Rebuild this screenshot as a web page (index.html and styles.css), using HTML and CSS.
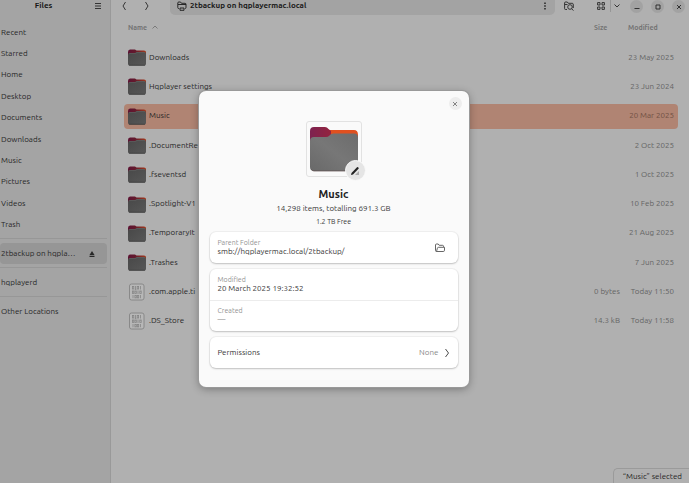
FILE: index.html
```html
<!DOCTYPE html>
<html lang="en">
<head>
<meta charset="utf-8">
<title>Files</title>
<link rel="stylesheet" href="styles.css">
</head>
<body>
<svg class="defs" aria-hidden="true">
  <defs>
    <linearGradient id="tab" x1="0" y1="0" x2="1" y2="0"><stop offset="0" stop-color="#5c1233"/><stop offset=".4" stop-color="#641a2c"/><stop offset="1" stop-color="#a33a1c"/></linearGradient>
    <linearGradient id="front" x1="0" y1="0" x2="1" y2="1"><stop offset="0" stop-color="#484848"/><stop offset="1" stop-color="#575757"/></linearGradient>
    <linearGradient id="purple" x1="0" y1="0" x2="1" y2="0"><stop offset="0" stop-color="#7d2350"/><stop offset="1" stop-color="#94233f"/></linearGradient>
    <linearGradient id="grey" x1="0" y1="1" x2="1" y2="0"><stop offset="0" stop-color="#696969"/><stop offset=".5" stop-color="#777"/><stop offset="1" stop-color="#6c6c6c"/></linearGradient>
    <symbol id="folder" viewBox="0 0 18 17">
      <path d="M0 3Q0 .5 2 .5H7L8.500 1.500H16Q18 1.500 18 3V8H0Z" fill="url(#tab)"/>
      <path d="M0 6Q0 4 2 4H7L8.500 3H16Q18 3 18 5V15Q18 16.500 16 16.500H2Q0 16.500 0 15Z" fill="url(#front)"/>
      <path d="M1 5Q1 4.500 2 4.500H7.500L9 3.500H17" fill="none" stroke="#676767" stroke-width=".5"/>
      <path d="M1 16.300H17" stroke="#333" stroke-width=".7"/>
    </symbol>
    <symbol id="binary" viewBox="0 0 18 18">
      <rect x="1.500" y="1" width="14.500" height="16" rx="2" fill="#b7b7b7" stroke="#858585"/>
      <g fill="none" stroke="#858585" stroke-width=".8">
        <rect x="4.400" y="3.500" width="1.400" height="2.500"/><path d="M7.500 3V6.500M12.500 3V6.500M6.900 6.400h1.400"/><rect x="9.200" y="3.500" width="1.400" height="2.500"/>
        <rect x="4.400" y="8" width="1.400" height="2.500"/><rect x="6.900" y="8" width="1.400" height="2.500"/><path d="M10 7.500V11"/><rect x="11.800" y="8" width="1.400" height="2.500"/>
        <path d="M5 12V15.200M12.500 12V15.200"/><rect x="6.900" y="12.400" width="1.400" height="2.500"/><rect x="9.300" y="12.400" width="1.400" height="2.500"/>
      </g>
    </symbol>
  </defs>
</svg>
<div class="window">
  <aside class="sidebar">
    <header class="side-head">
      <h1>Files</h1>
      <button class="icon-btn" aria-label="Main menu"><svg width="8" height="8" viewBox="0 0 8 8"><path d="M1 1.500H7M1 4H7M1 6.500H7"/></svg></button>
    </header>
    <nav>
      <ul class="places">
        <li><a href="#">Recent</a></li>
        <li><a href="#">Starred</a></li>
        <li><a href="#">Home</a></li>
        <li><a href="#">Desktop</a></li>
        <li><a href="#">Documents</a></li>
        <li><a href="#">Downloads</a></li>
        <li><a href="#">Music</a></li>
        <li><a href="#">Pictures</a></li>
        <li><a href="#">Videos</a></li>
        <li><a href="#">Trash</a></li>
      </ul>
      <div class="group current"><a href="#">2tbackup on hqpla…</a><button class="icon-btn" aria-label="Eject"><svg width="6" height="6" viewBox="0 0 6 6"><path class="solid" d="M3 0L5.500 4H.5ZM.5 4.800H5.500V6H.5Z"/></svg></button></div>
      <div class="group"><a href="#">hqplayerd</a></div>
      <div class="group"><a href="#">Other Locations</a></div>
    </nav>
  </aside>
  <main class="content">
    <header class="toolbar">
      <button class="icon-btn" aria-label="Back"><svg width="6" height="10" viewBox="0 0 6 10"><path d="M4.500 1L2 5L4.500 9"/></svg></button>
      <button class="icon-btn" aria-label="Forward"><svg width="6" height="10" viewBox="0 0 6 10"><path d="M1.500 1L4 5L1.500 9"/></svg></button>
      <div class="path">
        <svg width="10" height="10" viewBox="0 0 10 10"><path d="M2 7.500H1.500Q.8 7.500 .8 6.500V2Q.8 1 1.800 1H3.500L4.500 2.300H8Q9 2.300 9 3.300V6.500Q9 7.500 8 7.500M1 3.500H9M3 7H7V9.300H3Z"/></svg>
        <span>2tbackup on hqplayermac.local</span>
        <button class="icon-btn" aria-label="Folder menu"><svg width="8" height="8" viewBox="0 0 8 8"><path class="solid" d="M3.300 .5h1.400v1.400H3.300ZM3.300 3.300h1.400v1.400H3.300ZM3.300 6.100h1.400v1.400H3.300Z"/></svg></button>
      </div>
      <button class="icon-btn search" aria-label="Search"><svg width="10" height="10" viewBox="0 0 10 10"><path d="M3 8.500H1.500Q.6 8.500 .6 7.500V2Q.6 1 1.600 1H3.300L4.300 2.300H8.300Q9.300 2.300 9.300 4V7M.8 3.500H3.500M7.600 7.800L9.500 9.500"/><circle cx="6" cy="6" r="2.300"/></svg></button>
      <button class="icon-btn grid-view" aria-label="Grid view"><svg width="8" height="8" viewBox="0 0 8 8"><path d="M.6 .6H3V3H.6ZM5 .6H7.400V3H5ZM.6 5H3V7.400H.6ZM5 5H7.400V7.400H5Z"/></svg></button>
      <button class="icon-btn options" aria-label="View options"><svg width="6" height="6" viewBox="0 0 6 6"><path d="M.5 1.500L3 4L5.500 1.500"/></svg></button>
      <div class="controls">
        <button class="round" aria-label="Minimize"><svg width="8" height="8" viewBox="0 0 8 8"><path d="M1.500 5.500H6.500"/></svg></button>
        <button class="round" aria-label="Maximize"><svg width="8" height="8" viewBox="0 0 8 8"><path d="M2 2H6V6H2Z"/></svg></button>
        <button class="round" aria-label="Close window"><svg width="8" height="8" viewBox="0 0 8 8"><path d="M2 2L6 6M6 2L2 6"/></svg></button>
      </div>
    </header>
    <table class="files">
      <thead><tr><th>Name <svg width="6" height="4" viewBox="0 0 6 4"><path d="M.5 3.500L3 1L5.500 3.500"/></svg></th><th>Size</th><th>Modified</th></tr></thead>
      <tbody>
        <tr><td><svg width="18" height="17"><use href="#folder"/></svg>Downloads</td><td></td><td>23 May 2025</td></tr>
        <tr><td><svg width="18" height="17"><use href="#folder"/></svg>Hqplayer settings</td><td></td><td>23 Jun 2024</td></tr>
        <tr class="selected"><td><svg width="18" height="17"><use href="#folder"/></svg>Music</td><td></td><td>20 Mar 2025</td></tr>
        <tr><td><svg width="18" height="17"><use href="#folder"/></svg>.DocumentRe</td><td></td><td>2 Oct 2025</td></tr>
        <tr><td><svg width="18" height="17"><use href="#folder"/></svg>.fseventsd</td><td></td><td>1 Oct 2025</td></tr>
        <tr><td><svg width="18" height="17"><use href="#folder"/></svg>.Spotlight-V1</td><td></td><td>10 Feb 2025</td></tr>
        <tr><td><svg width="18" height="17"><use href="#folder"/></svg>.TemporaryIt</td><td></td><td>21 Aug 2025</td></tr>
        <tr><td><svg width="18" height="17"><use href="#folder"/></svg>.Trashes</td><td></td><td>7 Jun 2025</td></tr>
        <tr><td><svg width="18" height="18"><use href="#binary"/></svg>.com.apple.ti</td><td>0 bytes</td><td>Today 11:50</td></tr>
        <tr><td><svg width="18" height="18"><use href="#binary"/></svg>.DS_Store</td><td>14.3 kB</td><td>Today 11:58</td></tr>
      </tbody>
    </table>
    <p class="status">“Music” selected</p>
  </main>
</div>
<dialog open class="props" aria-labelledby="props-title">
  <button class="round close" aria-label="Close"><svg width="8" height="8" viewBox="0 0 8 8"><path d="M2 2L6 6M6 2L2 6"/></svg></button>
  <div class="preview">
    <svg class="big-folder" width="48" height="46" viewBox="0 0 48 46">
      <path d="M18 4H44Q48 4 48 9V16H12Z" fill="#e0501f"/>
      <path d="M0 5Q0 1 4 1H15Q17 1 18.500 3L21 5V14L0 18Z" fill="url(#purple)"/>
      <path d="M0 15Q0 11 4 11H16Q18 11 19.500 9.500L20.500 8.500Q22 7.500 24 7.500H44Q48 7.500 48 11.500V41Q48 45 44 45H4Q0 45 0 41Z" fill="url(#grey)"/>
      <path d="M1.500 43.500Q2.500 45 4 45H44Q45.500 45 46.500 43.500" fill="none" stroke="#5b4a4a" stroke-width=".7"/>
    </svg>
    <button class="edit" aria-label="Edit icon"><svg width="10" height="10" viewBox="0 0 10 10"><path class="solid" d="M1 9L1.500 7L7 1.300Q7.700 .8 8.400 1.500Q9 2.200 8.500 2.800L3 8.500Z"/><path class="shade" d="M5 9L9 5V9Z"/></svg></button>
  </div>
  <h2 id="props-title">Music</h2>
  <p class="summary">14,298 items, totalling 691.3 GB</p>
  <p class="free">1.2 TB Free</p>
  <section class="card">
    <div class="row"><div><small>Parent Folder</small><p>smb://hqplayermac.local/2tbackup/</p></div>
      <button class="icon-btn open" aria-label="Open parent folder"><svg width="10" height="10" viewBox="0 0 10 10"><path d="M1.500 8.500Q.5 8.500 .5 7.500V2Q.5 1 1.500 1H3.200L4.200 2.300H7.500Q8.500 2.300 8.500 3.300V4M1.500 8.500H8.200Q9.500 8.500 9.500 7.300V4.300H3.500Q2.600 4.300 2.400 5.200L1.500 8.500"/></svg></button></div>
  </section>
  <section class="card">
    <div class="row"><div><small>Modified</small><p>20 March 2025 19:32:52</p></div></div>
    <div class="row"><div><small>Created</small><p class="dim">—</p></div></div>
  </section>
  <section class="card">
    <button class="row permissions"><span>Permissions</span><span class="none">None</span><svg width="6" height="10" viewBox="0 0 6 10"><path d="M1.500 1L4.500 5L1.500 9"/></svg></button>
  </section>
</dialog>
</body>
</html>
```
FILE: styles.css
```css
* { box-sizing: border-box; }
body {
  margin: 0;
  font: 8px/12px Ubuntu, "Noto Sans", sans-serif;
  color: #272727;
  background: #b0b0b0;
  overflow: hidden;
}
h1, h2, p, ul { margin: 0; padding: 0; }
a { color: inherit; text-decoration: none; }
button { font: inherit; color: inherit; border: 0; padding: 0; background: none; }
svg { display: block; flex: none; fill: none; stroke: currentColor; stroke-width: .9; }
svg .solid { fill: currentColor; stroke: none; }
svg .shade { fill: #aaa; stroke: none; }
svg use, .big-folder { stroke: none; }
.defs { position: absolute; width: 0; height: 0; }
.window { display: flex; min-height: 100vh; }
.icon-btn { display: grid; place-items: center; flex: none; }

.sidebar { flex: none; width: 111px; background: #a4a4a4; border-right: 1px solid #999; }
.side-head { display: grid; grid-template-columns: 87px auto; justify-content: start; align-items: center; height: 12px; }
.side-head h1 { font-size: 8px; line-height: 12px; text-align: center; color: #161616; }
.side-head .icon-btn { width: 22px; }
.places { list-style: none; display: grid; grid-template-rows: repeat(10, 1fr); height: 214px; margin-top: 10px; }
.places li { display: flex; align-items: center; }
nav { padding-right: 3px; }
nav a { padding-left: 1px; }
.group { position: relative; display: flex; align-items: center; height: 21px; padding-right: 12px; border-radius: 4px; }
.places + .group { margin-top: 7px; }
.group::before { content: ""; position: absolute; left: 0; right: 0; top: -5px; border-top: 1px solid #979797; }
.group + .group { margin-top: 8px; }
.group a { flex: 1; white-space: nowrap; }
.current { background: #969696; }

.content { flex: 1; min-width: 0; display: flex; flex-direction: column; background: #b0b0b0; }
.toolbar { display: flex; height: 15px; padding: 0 4px 0 10px; }
.toolbar > .icon-btn { height: 12px; width: 6px; margin-right: 17px; }
.path { flex: 1; display: flex; align-items: center; gap: 3px; height: 15px; padding: 0 6px 3px 7px; margin-left: 3px; background: #a3a3a3; border-radius: 0 0 5px 5px; font-weight: 700; color: #1a1a1a; }
.path span { flex: 1; }
.toolbar > .search { width: 10px; margin: 0 23px 0 9px; }
.toolbar > .grid-view { width: 8px; margin-right: 5px; }
.toolbar > .options { width: 12px; margin-right: 8px; border-left: 1px solid #969696; }
.controls { display: flex; gap: 8px; }
.round { width: 13px; height: 13px; border-radius: 50%; background: #a2a2a2; display: grid; place-items: center; }

.files { display: block; margin: 6px 11px 0 13px; }
.files thead, .files tbody { display: grid; }
.files tr { display: grid; grid-template-columns: 1fr 60px 54px; align-items: center; padding-right: 4px; }
.files thead tr { height: 12px; }
.files th { font-size: 7px; color: #747474; text-align: left; padding: 0; }
.files th:first-child { display: flex; align-items: center; gap: 5px; padding-left: 4px; }
.files th:nth-child(2) { padding-left: 34px; }
.files th:nth-child(3) { padding-left: 8px; }
.files tbody { height: 289px; margin-top: 12px; grid-template-rows: repeat(10, 1fr); row-gap: 4px; }
.files td { padding: 0; text-align: right; color: #646464; white-space: nowrap; }
.files td:first-child { display: flex; align-items: center; gap: 3px; padding-left: 4px; color: #272727; }
.files .selected { background: #b08473; border-radius: 4px; }
.selected td:last-child { color: #705144; }
.status { align-self: flex-end; margin-top: auto; padding: 2px 7px 0 9px; border: 1px solid #9a9a9a; border-width: 1px 0 0 1px; border-radius: 5px 0 0; }

.props {
  position: absolute;
  top: 91px;
  left: calc(50% - 146px);
  margin: 0;
  width: 270px;
  padding: 6px 11px 19px;
  border: 0;
  border-radius: 7px;
  background: #fafafa;
  color: #383838;
  box-shadow: 0 0 0 1px #999, 0 2px 8px #0005;
  text-align: center;
}
.close { margin: 0 -4px 0 auto; background: #ededed; color: #777; }
.preview { position: relative; width: 56px; height: 56px; margin: 11px auto 10px; padding: 4px 3px; border: 1px solid #e2e2e2; border-radius: 3px; }
.edit { position: absolute; right: -5px; bottom: -5px; width: 21px; height: 21px; border: 1px solid #fafafa; border-radius: 50%; background: #e5e5e5; color: #222; display: grid; place-items: center; }
.props h2 { font-size: 11px; line-height: 15px; color: #222; margin-bottom: 1px; }
.props .free { font-size: 7px; }
.card { text-align: left; background: #fff; border-radius: 6px; box-shadow: 0 0 0 1px #0000000a, 0 1px 2px #0003; margin-top: 6px; }
.free + .card { margin-top: 5px; }
.row { display: flex; align-items: center; width: 100%; height: 31px; padding: 0 8px; }
.row + .row { border-top: 1px solid #ececec; }
.row div { flex: 1; }
.row small { display: block; font-size: 7px; line-height: 8px; color: #929292; }
.row .dim { color: #888; }
.open { margin-right: 5px; color: #555; }
.permissions span { flex: 1; text-align: left; }
.permissions .none { text-align: right; margin-right: 5px; color: #8a8a8a; }
```
